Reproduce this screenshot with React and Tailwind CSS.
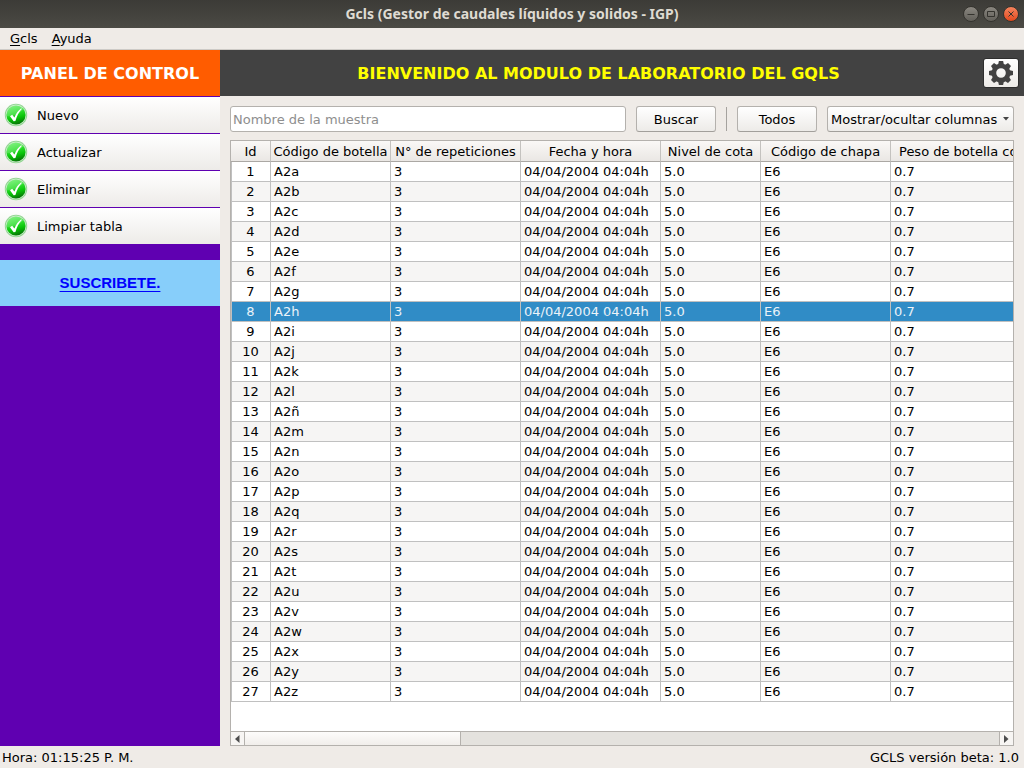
import React from "react";

const ACTIONS = ["Nuevo", "Actualizar", "Eliminar", "Limpiar tabla"];

const COLUMNS = [
  { label: "Id", width: "w-10" },
  { label: "Código de botella", width: "w-[120px]" },
  { label: "N° de repeticiones", width: "w-[130px]" },
  { label: "Fecha y hora", width: "w-[140px]" },
  { label: "Nivel de cota", width: "w-[100px]" },
  { label: "Código de chapa", width: "w-[130px]" },
  { label: "Peso de botella con", width: "w-auto" },
];

const SUFFIXES = "abcdefghijklñmnopqrstuvwxyz".split("");

const ROWS = SUFFIXES.map((letter, index) => ({
  id: index + 1,
  cells: ["A2" + letter, "3", "04/04/2004 04:04h", "5.0", "E6", "0.7"],
}));

const SELECTED_ID = 8;

function CheckIcon({ id }) {
  return (
    <svg viewBox="0 0 24 24" className="size-6 shrink-0" aria-hidden="true">
      <defs>
        <linearGradient id={id} x1="0.35" y1="0" x2="0.65" y2="1">
          <stop offset="0" stopColor="#62ee62" />
          <stop offset="0.35" stopColor="#2fe02f" />
          <stop offset="0.65" stopColor="#08c408" />
          <stop offset="1" stopColor="#056a05" />
        </linearGradient>
      </defs>
      <circle cx="12" cy="12" r="11.2" fill="#8fd48f" />
      <circle cx="12" cy="12" r="10.4" fill="#c9ecc9" />
      <circle cx="12" cy="12" r="9.6" fill={`url(#${id})`} />
      <path d="M2.6 13C8 14 14 12 19.5 6A9.5 9.5 0 0 0 2.6 13Z" fill="#fff" opacity="0.18" />
      <path d="M6 13.2 8.2 11.8 10.4 14.4C12 10.5 14 7.8 17.2 5.3L17.8 6C14.8 9 12.8 13 11.4 18L9.6 18.2Z" fill="#fff" />
    </svg>
  );
}

function GearIcon() {
  return (
    <svg viewBox="0 0 24 24" className="size-6 shrink-0" aria-hidden="true">
      <g fill="#424242">
        <path
          fillRule="evenodd"
          d="M12 2.6a9.4 9.4 0 1 0 0 18.8a9.4 9.4 0 0 0 0-18.8Zm0 4.6a4.8 4.8 0 1 1 0 9.6a4.8 4.8 0 0 1 0-9.6Z"
        />
        {[0, 45, 90, 135, 180, 225, 270, 315].map((angle) => (
          <path key={angle} d="M9 4 9.9 0H14.1L15 4Z" transform={`rotate(${angle} 12 12)`} />
        ))}
      </g>
    </svg>
  );
}

function WindowButton({ label, close, children }) {
  return (
    <button
      type="button"
      aria-label={label}
      className={
        "flex size-4 items-center justify-center rounded-full border border-[#34332e] " +
        (close ? "bg-linear-to-b from-[#f4835c] to-[#e2481a]" : "bg-linear-to-b from-[#8a8780] to-[#62605a]")
      }
    >
      <svg viewBox="0 0 14 14" className="size-3.5 shrink-0" fill="none" stroke="#34332e" aria-hidden="true">
        {children}
      </svg>
    </button>
  );
}

const buttonStyle =
  "h-[26px] rounded-[3px] border border-[#b4b1ad] border-b-[#a29f9b] bg-linear-to-b from-white to-[#edebe8] pt-0.5";

export default function App() {
  return (
    <div className="flex min-h-screen flex-col bg-[#efebe7] font-['DejaVu_Sans',sans-serif] text-[13px] leading-4 text-black">
      <header className="grid h-7 grid-cols-[1fr_auto_1fr] items-center bg-linear-to-b from-[#3c3b37] to-[#4b4a44] px-[5px]">
        <h1 className="col-start-2 font-['Noto_Sans',sans-serif] text-[14px] font-bold text-[#dfdbd2]">
          Gcls (Gestor de caudales líquidos y solidos - IGP)
        </h1>
        <div className="flex justify-end gap-1">
          <WindowButton label="Minimizar">
            <path d="M3.5 7.5h7" />
          </WindowButton>
          <WindowButton label="Maximizar">
            <path d="M3.5 4.5h7v5h-7z" />
          </WindowButton>
          <WindowButton label="Cerrar" close>
            <path d="m4.5 4.5 5 5m0-5-5 5" />
          </WindowButton>
        </div>
      </header>

      <nav className="flex h-[22px] items-center gap-3.5 border-b border-[#cdcac6] px-2.5">
        <button type="button">
          <span className="underline underline-offset-2">G</span>cls
        </button>
        <button type="button">
          <span className="underline underline-offset-2">A</span>yuda
        </button>
      </nav>

      <div className="flex flex-1">
        <aside className="flex w-[220px] shrink-0 flex-col bg-[#5f00b1]">
          <h2 className="flex h-[46px] items-center justify-center bg-[#ff5c00] pt-0.5 text-[16px] font-bold text-white">
            PANEL DE CONTROL
          </h2>
          <div className="flex flex-col gap-px pt-px">
            {ACTIONS.map((action, index) => (
              <button
                key={action}
                type="button"
                className="flex h-9 items-center gap-[9px] bg-linear-to-b from-white to-[#edebe8] px-1"
              >
                <CheckIcon id={`check-${index}`} />
                <span className="pt-0.5">{action}</span>
              </button>
            ))}
          </div>
          <a
            href="#suscribete"
            className="mt-4 flex h-[46px] items-center justify-center bg-[#87cefa] font-['Liberation_Sans',sans-serif] text-[15px] font-bold text-[#0000ff] underline decoration-1 underline-offset-3"
          >
            SUSCRIBETE.
          </a>
        </aside>

        <main className="flex min-w-0 flex-1 flex-col">
          <div className="flex h-[46px] items-center gap-1.5 bg-[#424242] pr-[5px]">
            <h2 className="flex-1 pt-0.5 text-center text-[16px] font-bold text-[#ffff00]">
              BIENVENIDO AL MODULO DE LABORATORIO DEL GQLS
            </h2>
            <button
              type="button"
              aria-label="Configuración"
              className="flex h-[30px] w-9 items-center justify-center rounded-[3px] border border-[#2e2e2e] bg-linear-to-b from-white to-[#edebe8]"
            >
              <GearIcon />
            </button>
          </div>

          <div className="flex flex-1 flex-col gap-2 px-2.5 pt-2.5">
            <div className="flex items-center gap-2.5">
              <input
                type="text"
                aria-label="Nombre de la muestra"
                placeholder="Nombre de la muestra"
                className="h-[26px] min-w-0 flex-1 rounded-[3px] border border-[#b4b1ad] bg-white px-0.5 placeholder:text-[#8e8e8e]"
              />
              <button type="button" className={`${buttonStyle} w-20`}>
                Buscar
              </button>
              <div className="h-6 w-px bg-[#a5a29e]" />
              <button type="button" className={`${buttonStyle} w-20`}>
                Todos
              </button>
              <button type="button" className={`${buttonStyle} flex w-[187px] items-center justify-between pr-1 pl-[3px]`}>
                Mostrar/ocultar columnas
                <svg viewBox="0 0 6 4" className="mb-0.5 h-1 w-1.5" fill="#444" aria-hidden="true">
                  <path d="M0 0h6L3 3.5Z" />
                </svg>
              </button>
            </div>

            <div className="flex flex-1 flex-col border border-[#b4b1ad] bg-white">
              <div className="flex-1 overflow-hidden">
                <table className="w-full table-fixed border-separate border-spacing-0">
                  <thead>
                    <tr className="h-[21px]">
                      {COLUMNS.map((column, index) => (
                        <th
                          key={column.label}
                          scope="col"
                          className={`${column.width} overflow-hidden border-b border-b-[#aba8a4] bg-linear-to-b from-[#faf8f6] to-[#eae7e4] p-0 pt-0.5 font-normal whitespace-nowrap ${
                            index === COLUMNS.length - 1 ? "pl-2 text-left" : "border-r border-r-[#c4c2bf]"
                          }`}
                        >
                          {column.label}
                        </th>
                      ))}
                    </tr>
                  </thead>
                  <tbody>
                    {ROWS.map((row) => (
                      <tr
                        key={row.id}
                        className={`h-5 ${
                          row.id === SELECTED_ID ? "bg-[#308cc6] text-[#eaf3f9]" : "odd:bg-white even:bg-[#f6f5f4]"
                        }`}
                      >
                        <td className="border-r border-b border-l border-[#c0c0c0] p-0 pr-px text-center">{row.id}</td>
                        {row.cells.map((cell, index) => (
                          <td
                            key={index}
                            className="border-r border-b border-[#c0c0c0] p-0 pl-[3px] whitespace-nowrap last:border-r-0"
                          >
                            {cell}
                          </td>
                        ))}
                      </tr>
                    ))}
                  </tbody>
                </table>
              </div>
              <div className="flex h-3.5 border-t border-[#b4b1ad] bg-[#e4e2de]">
                <button
                  type="button"
                  aria-label="Desplazar a la izquierda"
                  className="flex w-3.5 items-center justify-center border-r border-[#b4b1ad] bg-[#f7f5f3]"
                >
                  <svg viewBox="0 0 5 8" className="h-2 w-[5px]" fill="#4d4d4d" aria-hidden="true">
                    <path d="M4.5 0v8L0 4Z" />
                  </svg>
                </button>
                <div className="w-[216px] border-r border-[#b4b1ad] bg-linear-to-b from-[#fdfcfb] to-[#f1eeeb]" />
                <button
                  type="button"
                  aria-label="Desplazar a la derecha"
                  className="ml-auto flex w-3.5 items-center justify-center border-l border-[#b4b1ad] bg-[#f7f5f3]"
                >
                  <svg viewBox="0 0 5 8" className="h-2 w-[5px]" fill="#4d4d4d" aria-hidden="true">
                    <path d="M0 0v8l4.5-4Z" />
                  </svg>
                </button>
              </div>
            </div>
          </div>
        </main>
      </div>

      <footer className="flex h-[22px] items-center justify-between pt-0.5 pr-[5px] pl-0.5">
        <span>Hora: 01:15:25 P. M.</span>
        <span>GCLS versión beta: 1.0</span>
      </footer>
    </div>
  );
}
